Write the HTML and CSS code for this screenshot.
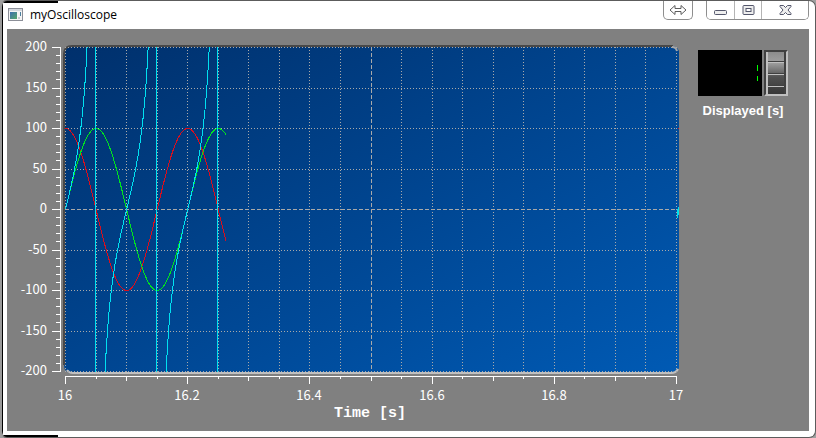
FILE: index.html
```html
<!DOCTYPE html>
<html lang="en">
<head>
<meta charset="utf-8">
<title>myOscilloscope</title>
<link rel="stylesheet" href="styles.css">
</head>
<body>
<div class="window">
  <header class="titlebar">
    <svg class="app-icon" width="16" height="14" viewBox="0 0 16 14" shape-rendering="crispEdges" aria-hidden="true">
      <defs>
        <linearGradient id="app" x1="0" y1="0" x2="1" y2="1"><stop offset="0" stop-color="#3d6fb0"/><stop offset="1" stop-color="#55a868"/></linearGradient>
      </defs>
      <rect x="0.5" y="0.5" width="14" height="12" fill="#f4f4f4" stroke="#8c8f98"/>
      <rect x="1" y="1" width="13" height="2" fill="#d4d8de"/>
      <rect x="2" y="4" width="7" height="7" fill="url(#app)"/>
      <rect x="10" y="9" width="2" height="2" fill="#c8ccd2"/>
      <rect x="12" y="4" width="1" height="4" fill="#4b7f9e"/>
    </svg>
    <h1 class="title">myOscilloscope</h1>
    <div class="caption">
      <button class="cap-btn switch" aria-label="Switch display">
        <svg width="18" height="12" viewBox="0 0 18 12"><path d="M1 6 L6 1.500 V4.500 H12 V1.500 L17 6 L12 10.500 V7.500 H6 V10.500 Z" fill="#fff" stroke="#5c5c5c"/></svg>
      </button>
      <div class="cap-group">
        <button class="cap-btn" aria-label="Minimize">
          <svg width="13" height="12" viewBox="0 0 13 12"><rect x="0.5" y="6.500" width="12" height="4" rx="1" fill="#eee" stroke="#53566b"/></svg>
        </button>
        <button class="cap-btn" aria-label="Maximize">
          <svg width="13" height="12" viewBox="0 0 13 12"><rect x="1" y="1.500" width="11" height="9" rx="1" fill="#eee" stroke="#53566b"/><rect x="4" y="4.500" width="5" height="3" fill="#fff" stroke="#53566b"/></svg>
        </button>
        <button class="cap-btn close" aria-label="Close">
          <svg width="13" height="12" viewBox="0 0 13 12"><path d="M1 1.500 H4.500 L6.500 3.500 L8.500 1.500 H12 V2.500 L9 6 L12 9.500 V10.500 H8.500 L6.500 8.500 L4.500 10.500 H1 V9.500 L4 6 L1 2.500 Z" fill="#eee" stroke="#53566b"/></svg>
        </button>
      </div>
    </div>
  </header>
  <main class="client">
    <div class="chart"><svg id="plot" class="plot" role="img" aria-label="Oscilloscope traces"></svg></div>
    <aside class="side">
      <div class="control">
        <output class="lcd" for="interval" aria-label="Interval"><i class="segment"></i><i class="segment"></i></output>
        <input class="wheel" id="interval" type="range" min="1" max="10" value="1">
      </div>
      <label class="caption-text" for="interval">Displayed [s]</label>
    </aside>
  </main>
</div>
<script src="plot.js"></script>
</body>
</html>
```

FILE: styles.css
```css
* { box-sizing: border-box; }

body {
  margin: 0;
  background: #a0a0a0;
  font-family: "Open Sans", "Noto Sans", sans-serif;
}

.window {
  display: flex;
  flex-direction: column;
  min-height: 100vh;
  padding: 0 6px 6px 5px;
  background:
    linear-gradient(#000, #000) 0 0 / 56px 2px no-repeat,
    linear-gradient(#000, #000) 0 100% / 56px 2px no-repeat,
    linear-gradient(#000, #000) 0 0 / 1px 100% no-repeat,
    #fff;
  border: 1px solid #5c5c5c;
  border-left: 2px solid #9a9a9a;
  border-radius: 7px;
}

.titlebar {
  display: flex;
  align-items: flex-start;
  height: 28px;
}

.app-icon { margin: 7px 6px 0 1px; }

.title {
  flex: 1;
  margin: 4px 0 0;
  font-size: 12px;
  line-height: 20px;
  font-weight: 400;
  color: #000;
}

.caption {
  display: flex;
  gap: 13px;
}

.cap-btn {
  display: flex;
  align-items: center;
  justify-content: center;
  width: 27px;
  height: 18px;
  padding: 0;
  background: #fff;
  border: 0;
}

.switch,
.cap-group {
  height: 19px;
  border: 1px solid #8e8e8e;
  border-top: 0;
  border-radius: 0 0 5px 5px;
}

.switch { width: 30px; }

.cap-group {
  display: flex;
  overflow: hidden;
}

.cap-group .cap-btn + .cap-btn { border-left: 1px solid #b4b4b4; }
.cap-group .close { width: 47px; }

.client {
  flex: 1;
  display: flex;
  background: #808080;
}

.chart {
  flex: 1;
  min-width: 0;
  display: flex;
}

.plot {
  flex: 1;
  min-width: 0;
  width: 100%;
}

.tick-label {
  font: 13px "Noto Sans CJK SC", sans-serif;
  fill: #fff;
}

.axis-title {
  font: bold 15px "Liberation Mono", monospace;
  fill: #fff;
}

.axis { stroke: #fff; fill: none; }
.grid { stroke: #a9a9a9; stroke-dasharray: 1 2; }
.zero { stroke: #a9a9a9; stroke-dasharray: 4 2; }
.trace { fill: none; }
.cos { stroke: #d80f1e; }
.sin { stroke: #00e61e; }
.tan { stroke: #00e0f0; }

.side {
  width: 120px;
  padding: 21px 29px 0 9px;
  display: flex;
  flex-direction: column;
  align-items: center;
  gap: 6px;
}

.control {
  display: flex;
  gap: 2px;
  margin-right: -8px;
}

.lcd {
  display: flex;
  flex-direction: column;
  align-items: flex-end;
  gap: 5px;
  width: 64px;
  height: 46px;
  padding: 15px 4px;
  background: #000;
}

.segment {
  width: 1px;
  height: 6px;
  background: #00ff00;
}

.wheel {
  appearance: none;
  width: 24px;
  height: 46px;
  margin: 0;
  border: 2px solid #404040;
  border-right-color: #c0c0c0;
  border-bottom-color: #c0c0c0;
  background:
    linear-gradient(#c0c0c0, #c0c0c0) 0 0 / 2px 100% no-repeat,
    linear-gradient(#404040, #404040) 100% 0 / 2px 100% no-repeat,
    linear-gradient(#404040 50%, #c0c0c0 50%) 0 9px / 100% 2px no-repeat,
    linear-gradient(#404040 50%, #c0c0c0 50%) 0 21px / 100% 2px no-repeat,
    linear-gradient(#404040 50%, #c0c0c0 50%) 0 33px / 100% 2px no-repeat,
    linear-gradient(#8c8c8c, #a0a0a0 25%, #505050 60%, #383838);
}

.wheel::-webkit-slider-thumb {
  appearance: none;
  width: 1px;
  height: 1px;
  background: transparent;
}

.caption-text {
  margin-right: -8px;
  font: bold 13px/18px "Liberation Sans", sans-serif;
  color: #fff;
  white-space: nowrap;
}
```

FILE: plot.js
```js
(function () {
  const svg = document.getElementById('plot');
  const T0 = 16, SPAN = 1, NOW = 16.2627, PERIOD = 0.2, AMP = 100, LIMIT = 200;

  function render() {
    const W = svg.clientWidth, H = svg.clientHeight;
    const L = 58, R = W - 13, T = 18, B = H - 60;
    const px = t => L + (t - T0) / SPAN * (R - L);
    const py = v => T + (LIMIT - v) / (2 * LIMIT) * (B - T);
    const snap = n => Math.round(n) + 0.5;
    const line = (cls, x1, y1, x2, y2) =>
      `<line class="${cls}" x1="${x1}" y1="${y1}" x2="${x2}" y2="${y2}"/>`;
    const text = (cls, x, y, anchor, s) =>
      `<text class="${cls}" x="${x}" y="${y}" text-anchor="${anchor}">${s}</text>`;

    const left = L - 1, right = R + 3, top = T - 1, bottom = B + 2;
    let out = `<defs>
      <linearGradient id="canvas" x1="0" y1="0" x2="1" y2="1">
        <stop offset="0" stop-color="#00306c"/><stop offset="1" stop-color="#005ab4"/>
      </linearGradient>
      <clipPath id="area"><rect x="${L}" y="${T}" width="${right - L}" height="${B - T + 1}"/></clipPath>
    </defs>`;

    // Sunken canvas with rounded corners
    out += `<path fill="url(#canvas)" d="M${left + 8} ${top} H${right - 8} Q${right - 2} ${top} ${right} ${top + 5} V${bottom - 5} Q${right - 2} ${bottom} ${right - 8} ${bottom} H${left + 8} Q${left} ${bottom} ${left} ${bottom - 8} V${top + 8} Q${left} ${top} ${left + 8} ${top} Z"/>
      <path fill="none" stroke="#484848" stroke-width="2" d="M${left} ${bottom - 8} V${top + 8} Q${left} ${top} ${left + 8} ${top} H${right - 6}"/>
      <path fill="none" stroke="#c0c0c0" stroke-width="2" d="M${left + 3} ${bottom - 3} Q${left + 5} ${bottom} ${left + 9} ${bottom} H${right - 8} Q${right - 3} ${bottom} ${right - 1} ${bottom - 4}"/>
      <path fill="none" stroke="#a8a8a8" stroke-width="2" d="M${right - 7} ${top + 1} Q${right - 3} ${top + 1} ${right - 2} ${top + 5}"/>`;

    // Grid and axes
    out += '<g shape-rendering="crispEdges">';
    for (let i = 0; i <= 20; i++) {
      const x = snap(px(T0 + i * SPAN / 20));
      out += line(i === 10 ? 'zero' : 'grid', x, T, x, B + 1);
      out += line('axis', x, B + 5, x, B + (i % 4 === 0 ? 13 : i % 2 === 0 ? 10 : 8));
    }
    for (let v = -LIMIT; v <= LIMIT; v += 10) {
      const y = snap(py(v)), major = v % 50 === 0;
      if (major) out += line(v === 0 ? 'zero' : 'grid', L, y, R + 1, y);
      out += line('axis', major ? 45 : 49, y, 54, y);
    }
    out += line('axis', 53.5, T, 53.5, B + 1) + line('axis', L, B + 5.5, R + 1, B + 5.5) + '</g>';

    // Traces
    const phase = t => (t - T0) / PERIOD * 2 * Math.PI;
    const point = (t, v) => (px(t) + 0.5).toFixed(2) + ' ' + (py(v) + 0.5).toFixed(2);
    const trace = (cls, fn, from, to) => {
      let d = '';
      for (let t = from; t <= to; t += 0.0005) {
        const v = fn(t);
        if (Math.abs(v) <= 220) d += (d ? 'L' : 'M') + point(t, v);
      }
      return `<path class="trace ${cls}" d="${d}"/>`;
    };
    out += '<g clip-path="url(#area)" shape-rendering="crispEdges">';
    out += trace('cos', t => AMP * Math.cos(phase(t)), T0, NOW);
    out += trace('sin', t => AMP * Math.sin(phase(t)), T0, NOW);
    for (let k = 0; k < 3; k++) {
      // Each branch of the tangent, joined by its vertical asymptote
      const from = T0 + (k === 0 ? 0 : k * 0.1 - 0.0495), to = Math.min(T0 + k * 0.1 + 0.0495, NOW);
      out += trace('tan', t => AMP * Math.tan(phase(t)), from, to);
      const x = Math.floor(px(T0 + k * 0.1 + 0.05)) + 0.5;
      out += line('tan', x, T, x, B + 1);
    }
    // Start of the previous sweep at the right edge
    out += `<path class="trace tan" d="M${R + 1.5} ${py(0) + 9} V${py(0)} M${R + 2.5} ${py(0) + 6} V${py(0) - 2}"/>`;
    out += line('cos', R + 2, py(AMP) + 0.5, R + 3, py(AMP) + 0.5);
    out += '</g>';

    // Labels
    for (let v = -LIMIT; v <= LIMIT; v += 50) out += text('tick-label', 40, Math.round(py(v)) + 4, 'end', v);
    for (let i = 0; i <= 5; i++) {
      out += text('tick-label', Math.round(px(T0 + i / 5)), B + 29, 'middle', +(T0 + i / 5).toFixed(1));
    }
    out += text('axis-title', Math.round((L + R) / 2) - 1, B + 46, 'middle', 'Time [s]');
    svg.innerHTML = out;
  }

  render();
  window.addEventListener('resize', render);
})();
```
